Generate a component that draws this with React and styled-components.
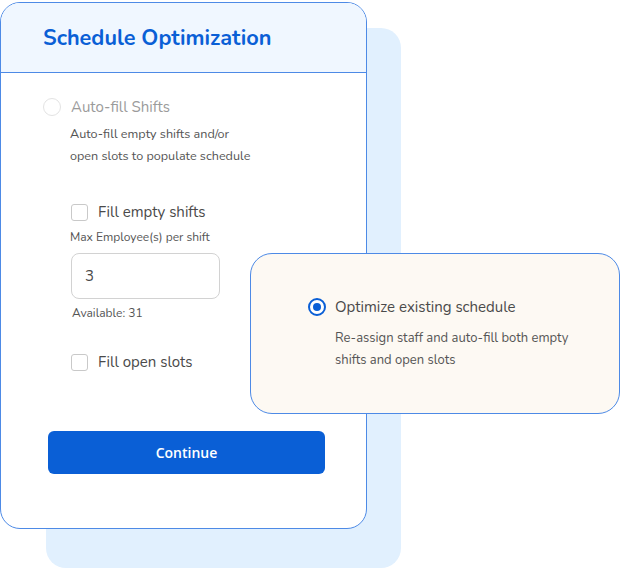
import React from "react";
import styled, { createGlobalStyle } from "styled-components";

const Global = createGlobalStyle`
  html, body { margin: 0; padding: 0; background: #ffffff; }
  body { font-family: "Nunito", "Lato", "Open Sans", sans-serif; }
  * { box-sizing: border-box; }
`;

const Stage = styled.div`
  position: relative;
  width: 620px;
  height: 568px;
  overflow: hidden;
  padding-top: 2px;
`;

const Backdrop = styled.div`
  position: absolute;
  left: 46px;
  top: 28px;
  width: 355px;
  height: 540px;
  border-radius: 20px;
  background: #e1f0fe;
`;

const Card = styled.div`
  position: relative;
  width: 367px;
  height: 527px;
  border: 1px solid #4d8ae6;
  border-radius: 20px;
  background: #ffffff;
  overflow: hidden;
  display: flex;
  flex-direction: column;
`;

const Header = styled.div`
  height: 70px;
  flex: none;
  background: #f0f7ff;
  border-bottom: 1px solid #4d8ae6;
  display: flex;
  align-items: center;
  padding: 0 0 0 42px;
`;

const Title = styled.h1`
  margin: 0;
  font-size: 21.7px;
  font-weight: 700;
  color: #0a5fd6;
`;

const Body = styled.div`
  padding: 23px 0 0 42px;
  display: flex;
  flex-direction: column;
`;

const OptionRow = styled.label`
  display: flex;
  align-items: center;
  gap: ${(p) => p.$gap || 10}px;
  font-size: 15px;
  color: ${(p) => (p.$muted ? "#9b9b9b" : "#4a4a4a")};
  height: 22px;
  margin-top: ${(p) => p.$top || 0}px;
`;

const RadioCircle = styled.span`
  width: 18px;
  height: 18px;
  border-radius: 50%;
  flex: none;
  border: ${(p) => (p.$checked ? "2px solid #0a5fd6" : "1.5px solid #e3e3e3")};
  background: #ffffff;
  display: flex;
  align-items: center;
  justify-content: center;
  &::after {
    content: "";
    display: ${(p) => (p.$checked ? "block" : "none")};
    width: 8px;
    height: 8px;
    border-radius: 50%;
    background: #0a5fd6;
  }
`;

const Desc = styled.p`
  margin: ${(p) => p.$margin || "0"};
  font-size: 12.6px;
  line-height: 22px;
  color: #555555;
`;

const Sub = styled.div`
  padding-left: 28px;
  display: flex;
  flex-direction: column;
`;

const Box = styled.span`
  width: 17px;
  height: 17px;
  flex: none;
  border: 1.5px solid #c9c9c9;
  border-radius: 3px;
  background: #ffffff;
`;

const SmallLabel = styled.div`
  font-size: 12px;
  color: #555555;
  margin: ${(p) => p.$margin || "0"};
  line-height: 16px;
`;

const Input = styled.div`
  width: 149px;
  height: 46px;
  border: 1px solid #d2d2d2;
  border-radius: 8px;
  display: flex;
  align-items: center;
  padding-left: 13px;
  font-size: 15px;
  color: #4a4a4a;
  margin-top: 8px;
`;

const Button = styled.button`
  margin: 58px 0 0 5px;
  width: 277px;
  height: 43px;
  border: none;
  border-radius: 6px;
  background: #0a5fd6;
  color: #ffffff;
  font-family: "Open Sans", sans-serif;
  font-size: 14px;
  font-weight: 600;
`;

const Floating = styled.div`
  position: absolute;
  left: 250px;
  top: 253px;
  width: 370px;
  height: 161px;
  border: 1px solid #4d8ae6;
  border-radius: 22px;
  background: #fdf9f3;
  padding: 42px 0 0 57px;
  display: flex;
  flex-direction: column;
`;

const FloatDesc = styled(Desc)`
  padding-left: 27px;
  font-size: 13px;
`;

export default function App() {
  return (
    <>
      <Global />
      <Stage>
        <Backdrop />
        <Card>
          <Header>
            <Title>Schedule Optimization</Title>
          </Header>
          <Body>
            <OptionRow $muted>
              <RadioCircle />
              Auto-fill Shifts
            </OptionRow>
            <Desc $margin="5px 0 0 27px">
              Auto-fill empty shifts and/or
              <br />
              open slots to populate schedule
            </Desc>
            <Sub>
              <OptionRow $top={34}>
                <Box />
                Fill empty shifts
              </OptionRow>
              <SmallLabel $margin="6px 0 0 -1px">Max Employee(s) per shift</SmallLabel>
              <Input>3</Input>
              <SmallLabel $margin="6px 0 0 1px">Available: 31</SmallLabel>
              <OptionRow $top={30}>
                <Box />
                Fill open slots
              </OptionRow>
            </Sub>
            <Button>Continue</Button>
          </Body>
        </Card>
        <Floating>
          <OptionRow $gap={9}>
            <RadioCircle $checked />
            Optimize existing schedule
          </OptionRow>
          <FloatDesc $margin="9px 0 0 0">
            Re-assign staff and auto-fill both empty
            <br />
            shifts and open slots
          </FloatDesc>
        </Floating>
      </Stage>
    </>
  );
}
